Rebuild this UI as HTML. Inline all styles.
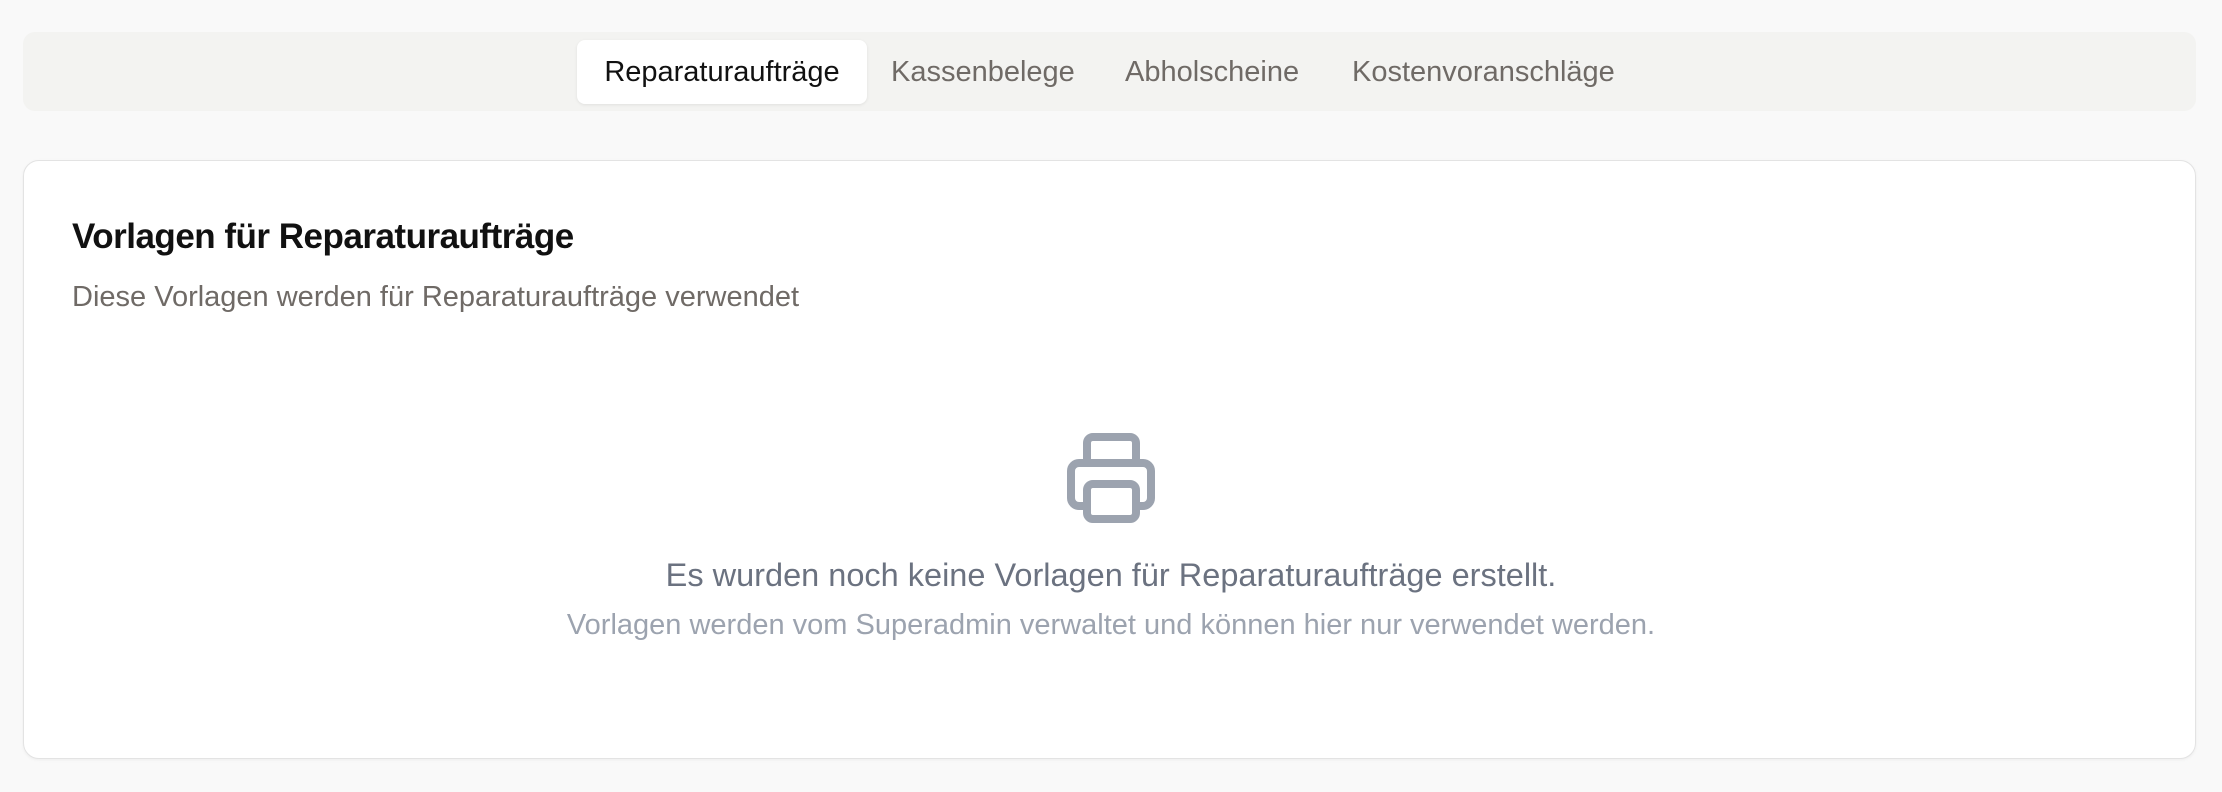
<!DOCTYPE html>
<html><head><meta charset="utf-8"><style>
html,body{margin:0;padding:0;}
body{width:2222px;height:792px;background:#f9f9f9;font-family:"Liberation Sans",sans-serif;position:relative;overflow:hidden;}
.bar{position:absolute;left:23px;top:32px;width:2173px;height:79px;background:#f3f3f1;border-radius:12px;}
.tab{position:absolute;top:40px;height:64px;line-height:64px;font-size:29px;color:#6f6a66;white-space:nowrap;}
.tab.active{background:#fff;color:#111;border-radius:8px;box-shadow:0 1px 3px rgba(0,0,0,.08);left:577px;width:290px;text-align:center;}
.card{position:absolute;left:23px;top:160px;width:2171px;height:597px;background:#fff;border:1.5px solid #e3e3e3;border-radius:16px;box-shadow:0 1px 3px rgba(0,0,0,.05);}
h1{position:absolute;left:72px;top:217px;margin:0;font-size:35px;font-weight:bold;color:#111;letter-spacing:-0.5px;}
.sub{position:absolute;left:72px;top:281px;font-size:29px;color:#6f6a66;}
.t1{position:absolute;left:0;width:2222px;text-align:center;top:557px;font-size:32.5px;color:#6b7280;}
.t2{position:absolute;left:0;width:2222px;text-align:center;top:609px;font-size:29px;color:#9ca3af;}
</style></head><body>
<div class="bar"></div>
<div class="tab active">Reparaturaufträge</div>
<div class="tab" style="left:891px">Kassenbelege</div>
<div class="tab" style="left:1125px">Abholscheine</div>
<div class="tab" style="left:1352px">Kostenvoranschläge</div>
<div class="card"></div>
<h1>Vorlagen für Reparaturaufträge</h1>
<div class="sub">Diese Vorlagen werden für Reparaturaufträge verwendet</div>
<svg style="position:absolute;left:1067px;top:433px" width="88" height="90" viewBox="0 0 88 90" fill="none" stroke="#9ca3af" stroke-width="8" stroke-linejoin="round">
<path d="M20 30 V10 a6 6 0 0 1 6-6 H63 a6 6 0 0 1 6 6 V30"/>
<path d="M20 73 H12 a8 8 0 0 1-8-8 V38 a8 8 0 0 1 8-8 H76 a8 8 0 0 1 8 8 V65 a8 8 0 0 1-8 8 H69"/>
<rect x="20" y="51" width="49" height="35" rx="6"/>
</svg>
<div class="t1">Es wurden noch keine Vorlagen für Reparaturaufträge erstellt.</div>
<div class="t2">Vorlagen werden vom Superadmin verwaltet und können hier nur verwendet werden.</div>
</body></html>
